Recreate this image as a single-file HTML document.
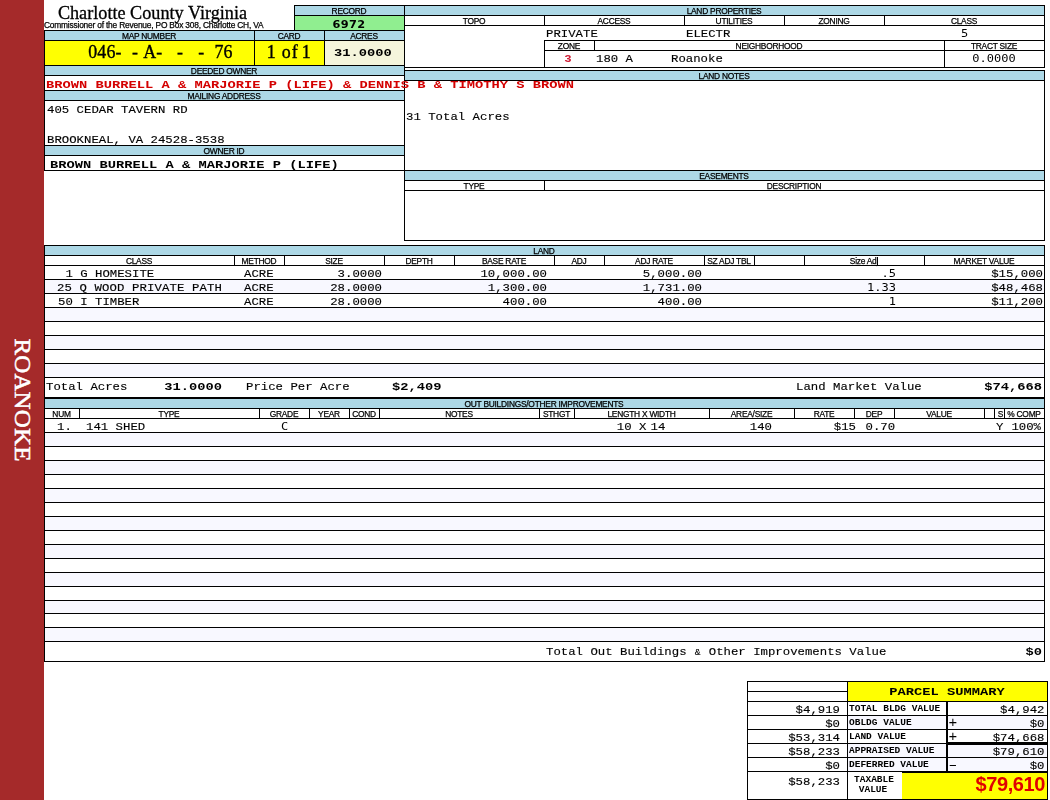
<!DOCTYPE html>
<html><head><meta charset="utf-8"><title>Charlotte County Virginia</title>
<style>
html,body{margin:0;padding:0;background:#fff;}
body{width:1050px;height:800px;position:relative;overflow:hidden;}
#pg{position:absolute;left:0;top:0;width:1050px;height:800px;opacity:0.999;}
.b{position:absolute;}
.t{position:absolute;white-space:pre;line-height:16px;height:16px;color:#000;}
.ser{font-family:"Liberation Serif",serif;font-size:18.2px;-webkit-text-stroke:0.3px #000;}
.ser2{font-family:"Liberation Serif",serif;font-size:17.9px;-webkit-text-stroke:0.35px #000;}
.amp{display:inline-block;width:7.4px;font-size:9.5px;text-align:center;}
.sub{font-family:"Liberation Sans",sans-serif;font-size:8.4px;letter-spacing:-0.2px;-webkit-text-stroke:0.25px #000;}
.lbl{font-family:"Liberation Sans",sans-serif;font-size:8.4px;letter-spacing:-0.25px;-webkit-text-stroke:0.25px #000;}
.rec{font-family:"DejaVu Sans",sans-serif;font-weight:bold;font-size:11.3px;letter-spacing:0.35px;}
.m{font-family:"Liberation Mono",monospace;font-size:12.33px;-webkit-text-stroke:0.15px #000;transform:scaleY(0.87);transform-origin:0 11px;}
.m2{font-family:"DejaVu Sans Mono","Liberation Mono",monospace;font-size:12px;transform:scaleY(0.85);transform-origin:0 12px;}
.m3{font-family:"Liberation Mono",monospace;font-size:12.33px;font-weight:bold;transform:scaleY(0.87);transform-origin:0 11px;}
.mb{font-family:"Liberation Mono",monospace;font-size:13.75px;font-weight:bold;transform:scaleY(0.81);transform-origin:0 11px;}
.ms{font-family:"Liberation Mono",monospace;font-size:9.5px;font-weight:bold;transform:scaleY(0.87);transform-origin:0 10px;}
.sg{font-family:"Liberation Mono",monospace;font-size:14.5px;}
.big{font-family:"Liberation Sans",sans-serif;font-size:20px;letter-spacing:-0.4px;font-weight:bold;color:#E00000;}
.side{font-family:"Liberation Serif",serif;font-size:23.6px;letter-spacing:0.2px;-webkit-text-stroke:0.5px #fff;color:#fff;line-height:30px;height:30px;width:200px;margin-left:-100px;margin-top:-15px;text-align:center;transform:rotate(90deg) scaleX(1.055);}
</style></head>
<body>
<div id="pg">
<div class="b" style="left:0px;top:0px;width:44px;height:800px;background:#A52A2A;"></div>
<div class="t side" style="left:23.1px;top:400.2px;">ROANOKE</div>
<div class="t ser" style="left:-47.5px;width:400px;text-align:center;top:4.5px;">Charlotte County Virginia</div>
<div class="t sub" style="left:44px;top:17px;">Commissioner of the Revenue, PO Box 308, Charlotte CH, VA</div>
<div class="b" style="left:294px;top:5px;width:111px;height:26px;background:#000;"></div>
<div class="b" style="left:295px;top:6px;width:109px;height:9px;background:#ADD8E6;"></div>
<div class="b" style="left:295px;top:16px;width:109px;height:14px;background:#90EE90;"></div>
<div class="t lbl" style="left:149px;width:400px;text-align:center;top:3px;">RECORD</div>
<div class="t rec" style="left:149px;width:400px;text-align:center;top:17px;">6972</div>
<div class="b" style="left:44px;top:30px;width:361px;height:141px;background:#000;"></div>
<div class="b" style="left:45px;top:31px;width:209px;height:9px;background:#ADD8E6;"></div>
<div class="b" style="left:255px;top:31px;width:69px;height:9px;background:#ADD8E6;"></div>
<div class="b" style="left:325px;top:31px;width:79px;height:9px;background:#ADD8E6;"></div>
<div class="t lbl" style="left:-51px;width:400px;text-align:center;top:28px;">MAP NUMBER</div>
<div class="t lbl" style="left:89px;width:400px;text-align:center;top:28px;">CARD</div>
<div class="t lbl" style="left:164px;width:400px;text-align:center;top:28px;">ACRES</div>
<div class="b" style="left:45px;top:41px;width:209px;height:24px;background:#FFFF00;"></div>
<div class="b" style="left:255px;top:41px;width:69px;height:24px;background:#FFFF00;"></div>
<div class="b" style="left:325px;top:41px;width:79px;height:24px;background:#F5F5DC;"></div>
<div class="t ser2" style="left:88.3px;top:44.2px;letter-spacing:0.1px">046-</div>
<div class="t ser2" style="left:132px;top:44.2px;">-</div>
<div class="t ser2" style="left:143.3px;top:44.2px;">A-</div>
<div class="t ser2" style="left:176.9px;top:44.2px;">-</div>
<div class="t ser2" style="left:198.3px;top:44.2px;">-</div>
<div class="t ser2" style="left:214.5px;top:44.2px;">76</div>
<div class="t ser2" style="left:266.8px;top:44.3px;">1</div>
<div class="t ser2" style="left:281.8px;top:44.3px;letter-spacing:1px">of</div>
<div class="t ser2" style="left:301.8px;top:44.3px;">1</div>
<div class="t mb" style="left:163px;width:400px;text-align:center;top:45px;">31.0000</div>
<div class="b" style="left:45px;top:66px;width:359px;height:9px;background:#ADD8E6;"></div>
<div class="t lbl" style="left:24px;width:400px;text-align:center;top:63px;">DEEDED OWNER</div>
<div class="b" style="left:45px;top:76px;width:359px;height:14px;background:#fff;"></div>
<div class="b" style="left:45px;top:91px;width:359px;height:9px;background:#ADD8E6;"></div>
<div class="t lbl" style="left:24px;width:400px;text-align:center;top:88px;">MAILING ADDRESS</div>
<div class="b" style="left:45px;top:101px;width:359px;height:44px;background:#fff;"></div>
<div class="t m" style="left:47px;top:102px;">405 CEDAR TAVERN RD</div>
<div class="t m" style="left:47px;top:132px;">BROOKNEAL, VA 24528-3538</div>
<div class="b" style="left:45px;top:146px;width:359px;height:9px;background:#ADD8E6;"></div>
<div class="t lbl" style="left:24px;width:400px;text-align:center;top:143px;">OWNER ID</div>
<div class="b" style="left:45px;top:156px;width:359px;height:14px;background:#fff;"></div>
<div class="t mb" style="left:50px;top:157px;">BROWN BURRELL A &amp; MARJORIE P (LIFE)</div>
<div class="t mb" style="left:46px;top:77px;color:#D40000;z-index:2;">BROWN BURRELL A &amp; MARJORIE P (LIFE) &amp; DENNIS B &amp; TIMOTHY S BROWN</div>
<div class="b" style="left:404px;top:5px;width:1px;height:236px;background:#000"></div>
<div class="b" style="left:1044px;top:5px;width:1px;height:63px;background:#000"></div>
<div class="b" style="left:404px;top:5px;width:641px;height:1px;background:#000"></div>
<div class="b" style="left:405px;top:6px;width:639px;height:9px;background:#ADD8E6;"></div>
<div class="b" style="left:404px;top:15px;width:641px;height:1px;background:#000"></div>
<div class="t lbl" style="left:524px;width:400px;text-align:center;top:3px;">LAND PROPERTIES</div>
<div class="b" style="left:404px;top:25px;width:641px;height:1px;background:#000"></div>
<div class="b" style="left:544px;top:15px;width:1px;height:11px;background:#000"></div>
<div class="b" style="left:684px;top:15px;width:1px;height:11px;background:#000"></div>
<div class="b" style="left:784px;top:15px;width:1px;height:11px;background:#000"></div>
<div class="b" style="left:884px;top:15px;width:1px;height:11px;background:#000"></div>
<div class="t lbl" style="left:274px;width:400px;text-align:center;top:13px;">TOPO</div>
<div class="t lbl" style="left:414px;width:400px;text-align:center;top:13px;">ACCESS</div>
<div class="t lbl" style="left:534px;width:400px;text-align:center;top:13px;">UTILITIES</div>
<div class="t lbl" style="left:634px;width:400px;text-align:center;top:13px;">ZONING</div>
<div class="t lbl" style="left:764px;width:400px;text-align:center;top:13px;">CLASS</div>
<div class="t m" style="left:546px;top:26px;">PRIVATE</div>
<div class="t m" style="left:686px;top:26px;">ELECTR</div>
<div class="t m2" style="left:961px;top:25px;">5</div>
<div class="b" style="left:544px;top:40px;width:501px;height:1px;background:#000"></div>
<div class="b" style="left:544px;top:50px;width:501px;height:1px;background:#000"></div>
<div class="b" style="left:544px;top:40px;width:1px;height:28px;background:#000"></div>
<div class="b" style="left:594px;top:40px;width:1px;height:11px;background:#000"></div>
<div class="b" style="left:944px;top:40px;width:1px;height:28px;background:#000"></div>
<div class="t lbl" style="left:369px;width:400px;text-align:center;top:38px;">ZONE</div>
<div class="t lbl" style="left:569px;width:400px;text-align:center;top:38px;">NEIGHBORHOOD</div>
<div class="t lbl" style="left:794px;width:400px;text-align:center;top:38px;">TRACT SIZE</div>
<div class="t m3" style="left:368px;width:400px;text-align:center;top:51px;color:#D02038;">3</div>
<div class="t m" style="left:596px;top:51px;">180 A</div>
<div class="t m" style="left:671px;top:51px;">Roanoke</div>
<div class="t m2" style="left:794px;width:400px;text-align:center;top:50px;">0.0000</div>
<div class="b" style="left:404px;top:67px;width:641px;height:1px;background:#000"></div>
<div class="b" style="left:1044px;top:70px;width:1px;height:171px;background:#000"></div>
<div class="b" style="left:404px;top:70px;width:641px;height:1px;background:#000"></div>
<div class="b" style="left:405px;top:71px;width:639px;height:9px;background:#ADD8E6;z-index:3;"></div>
<div class="b" style="left:404px;top:80px;width:641px;height:1px;background:#000"></div>
<div class="b" style="left:404px;top:70px;width:641px;height:1px;background:#000;z-index:3"></div>
<div class="t lbl" style="left:524px;width:400px;text-align:center;top:68px;z-index:4;">LAND NOTES</div>
<div class="t m" style="left:406px;top:109px;">31 Total Acres</div>
<div class="b" style="left:404px;top:170px;width:641px;height:1px;background:#000"></div>
<div class="b" style="left:405px;top:171px;width:639px;height:9px;background:#ADD8E6;"></div>
<div class="b" style="left:404px;top:180px;width:641px;height:1px;background:#000"></div>
<div class="t lbl" style="left:524px;width:400px;text-align:center;top:168px;">EASEMENTS</div>
<div class="b" style="left:404px;top:190px;width:641px;height:1px;background:#000"></div>
<div class="b" style="left:544px;top:180px;width:1px;height:11px;background:#000"></div>
<div class="t lbl" style="left:274px;width:400px;text-align:center;top:178px;">TYPE</div>
<div class="t lbl" style="left:594px;width:400px;text-align:center;top:178px;">DESCRIPTION</div>
<div class="b" style="left:404px;top:240px;width:641px;height:1px;background:#000"></div>
<div class="b" style="left:44px;top:245px;width:1px;height:417px;background:#000"></div>
<div class="b" style="left:1044px;top:245px;width:1px;height:417px;background:#000"></div>
<div class="b" style="left:44px;top:245px;width:1001px;height:1px;background:#000"></div>
<div class="b" style="left:45px;top:246px;width:999px;height:9px;background:#ADD8E6;"></div>
<div class="b" style="left:44px;top:255px;width:1001px;height:1px;background:#000"></div>
<div class="t lbl" style="left:344px;width:400px;text-align:center;top:243px;">LAND</div>
<div class="b" style="left:234px;top:255px;width:1px;height:11px;background:#000"></div>
<div class="b" style="left:284px;top:255px;width:1px;height:11px;background:#000"></div>
<div class="b" style="left:384px;top:255px;width:1px;height:11px;background:#000"></div>
<div class="b" style="left:454px;top:255px;width:1px;height:11px;background:#000"></div>
<div class="b" style="left:554px;top:255px;width:1px;height:11px;background:#000"></div>
<div class="b" style="left:604px;top:255px;width:1px;height:11px;background:#000"></div>
<div class="b" style="left:704px;top:255px;width:1px;height:11px;background:#000"></div>
<div class="b" style="left:754px;top:255px;width:1px;height:11px;background:#000"></div>
<div class="b" style="left:804px;top:255px;width:1px;height:11px;background:#000"></div>
<div class="b" style="left:924px;top:255px;width:1px;height:11px;background:#000"></div>
<div class="t lbl" style="left:-61.0px;width:400px;text-align:center;top:253px;">CLASS</div>
<div class="t lbl" style="left:59.0px;width:400px;text-align:center;top:253px;">METHOD</div>
<div class="t lbl" style="left:134.0px;width:400px;text-align:center;top:253px;">SIZE</div>
<div class="t lbl" style="left:219.0px;width:400px;text-align:center;top:253px;">DEPTH</div>
<div class="t lbl" style="left:304.0px;width:400px;text-align:center;top:253px;">BASE RATE</div>
<div class="t lbl" style="left:379.0px;width:400px;text-align:center;top:253px;">ADJ</div>
<div class="t lbl" style="left:454.0px;width:400px;text-align:center;top:253px;">ADJ RATE</div>
<div class="t lbl" style="left:529.0px;width:400px;text-align:center;top:253px;">SZ ADJ TBL</div>
<div class="t lbl" style="left:664.0px;width:400px;text-align:center;top:253px;">Size Adj</div>
<div class="t lbl" style="left:784.0px;width:400px;text-align:center;top:253px;">MARKET VALUE</div>
<div class="b" style="left:877px;top:257px;width:1px;height:8px;background:#000"></div>
<div class="b" style="left:44px;top:265px;width:1001px;height:1px;background:#000"></div>
<div class="b" style="left:44px;top:279px;width:1001px;height:1px;background:#000"></div>
<div class="b" style="left:45px;top:280px;width:999px;height:13px;background:#F8F8FF;"></div>
<div class="b" style="left:44px;top:293px;width:1001px;height:1px;background:#000"></div>
<div class="b" style="left:44px;top:307px;width:1001px;height:1px;background:#000"></div>
<div class="b" style="left:45px;top:308px;width:999px;height:13px;background:#F8F8FF;"></div>
<div class="b" style="left:44px;top:321px;width:1001px;height:1px;background:#000"></div>
<div class="b" style="left:44px;top:335px;width:1001px;height:1px;background:#000"></div>
<div class="b" style="left:45px;top:336px;width:999px;height:13px;background:#F8F8FF;"></div>
<div class="b" style="left:44px;top:349px;width:1001px;height:1px;background:#000"></div>
<div class="b" style="left:44px;top:363px;width:1001px;height:1px;background:#000"></div>
<div class="b" style="left:45px;top:364px;width:999px;height:13px;background:#F8F8FF;"></div>
<div class="b" style="left:44px;top:377px;width:1001px;height:1px;background:#000"></div>
<div class="t m" style="left:58px;top:266px;"> 1 G HOMESITE</div>
<div class="t m" style="left:244px;top:266px;">ACRE</div>
<div class="t m" style="right:668px;text-align:right;top:266px;">3.0000</div>
<div class="t m" style="right:503px;text-align:right;top:266px;">10,000.00</div>
<div class="t m" style="right:348px;text-align:right;top:266px;">5,000.00</div>
<div class="t m2" style="right:154px;text-align:right;top:265px;">.5</div>
<div class="t m" style="right:7px;text-align:right;top:266px;">$15,000</div>
<div class="t m" style="left:57px;top:280px;letter-spacing:0.1px;">25 Q WOOD PRIVATE PATH</div>
<div class="t m" style="left:244px;top:280px;">ACRE</div>
<div class="t m" style="right:668px;text-align:right;top:280px;">28.0000</div>
<div class="t m" style="right:503px;text-align:right;top:280px;">1,300.00</div>
<div class="t m" style="right:348px;text-align:right;top:280px;">1,731.00</div>
<div class="t m2" style="right:154px;text-align:right;top:279px;">1.33</div>
<div class="t m" style="right:7px;text-align:right;top:280px;">$48,468</div>
<div class="t m" style="left:58px;top:294px;">50 I TIMBER</div>
<div class="t m" style="left:244px;top:294px;">ACRE</div>
<div class="t m" style="right:668px;text-align:right;top:294px;">28.0000</div>
<div class="t m" style="right:503px;text-align:right;top:294px;">400.00</div>
<div class="t m" style="right:348px;text-align:right;top:294px;">400.00</div>
<div class="t m2" style="right:154px;text-align:right;top:293px;">1</div>
<div class="t m" style="right:7px;text-align:right;top:294px;">$11,200</div>
<div class="t m" style="left:46px;top:379px;">Total Acres</div>
<div class="t mb" style="right:828px;text-align:right;top:379px;">31.0000</div>
<div class="t m" style="left:246px;top:379px;">Price Per Acre</div>
<div class="t mb" style="left:392px;top:379px;">$2,409</div>
<div class="t m" style="left:796px;top:379px;">Land Market Value</div>
<div class="t mb" style="right:8px;text-align:right;top:379px;">$74,668</div>
<div class="b" style="left:44px;top:397px;width:1001px;height:2px;background:#000"></div>
<div class="b" style="left:45px;top:399px;width:999px;height:9px;background:#ADD8E6;"></div>
<div class="b" style="left:44px;top:408px;width:1001px;height:1px;background:#000"></div>
<div class="t lbl" style="left:344px;width:400px;text-align:center;top:396px;">OUT BUILDINGS/OTHER IMPROVEMENTS</div>
<div class="b" style="left:79px;top:408px;width:1px;height:11px;background:#000"></div>
<div class="b" style="left:259px;top:408px;width:1px;height:11px;background:#000"></div>
<div class="b" style="left:309px;top:408px;width:1px;height:11px;background:#000"></div>
<div class="b" style="left:349px;top:408px;width:1px;height:11px;background:#000"></div>
<div class="b" style="left:379px;top:408px;width:1px;height:11px;background:#000"></div>
<div class="b" style="left:539px;top:408px;width:1px;height:11px;background:#000"></div>
<div class="b" style="left:574px;top:408px;width:1px;height:11px;background:#000"></div>
<div class="b" style="left:709px;top:408px;width:1px;height:11px;background:#000"></div>
<div class="b" style="left:794px;top:408px;width:1px;height:11px;background:#000"></div>
<div class="b" style="left:854px;top:408px;width:1px;height:11px;background:#000"></div>
<div class="b" style="left:894px;top:408px;width:1px;height:11px;background:#000"></div>
<div class="b" style="left:984px;top:408px;width:1px;height:11px;background:#000"></div>
<div class="b" style="left:994px;top:408px;width:1px;height:11px;background:#000"></div>
<div class="b" style="left:1004px;top:408px;width:1px;height:11px;background:#000"></div>
<div class="t lbl" style="left:-138.5px;width:400px;text-align:center;top:406px;">NUM</div>
<div class="t lbl" style="left:-31.0px;width:400px;text-align:center;top:406px;">TYPE</div>
<div class="t lbl" style="left:84.0px;width:400px;text-align:center;top:406px;">GRADE</div>
<div class="t lbl" style="left:129.0px;width:400px;text-align:center;top:406px;">YEAR</div>
<div class="t lbl" style="left:164.0px;width:400px;text-align:center;top:406px;">COND</div>
<div class="t lbl" style="left:259.0px;width:400px;text-align:center;top:406px;">NOTES</div>
<div class="t lbl" style="left:356.5px;width:400px;text-align:center;top:406px;">STHGT</div>
<div class="t lbl" style="left:441.5px;width:400px;text-align:center;top:406px;">LENGTH X WIDTH</div>
<div class="t lbl" style="left:551.5px;width:400px;text-align:center;top:406px;">AREA/SIZE</div>
<div class="t lbl" style="left:624.0px;width:400px;text-align:center;top:406px;">RATE</div>
<div class="t lbl" style="left:674.0px;width:400px;text-align:center;top:406px;">DEP</div>
<div class="t lbl" style="left:739.0px;width:400px;text-align:center;top:406px;">VALUE</div>
<div class="t lbl" style="left:800.5px;width:400px;text-align:center;top:406px;">S</div>
<div class="t lbl" style="left:824.0px;width:400px;text-align:center;top:406px;">% COMP</div>
<div class="b" style="left:44px;top:418px;width:1001px;height:1px;background:#000"></div>
<div class="b" style="left:44px;top:432px;width:1001px;height:1px;background:#000"></div>
<div class="b" style="left:45px;top:433px;width:999px;height:13px;background:#F8F8FF;"></div>
<div class="b" style="left:44px;top:446px;width:1001px;height:1px;background:#000"></div>
<div class="b" style="left:44px;top:460px;width:1001px;height:1px;background:#000"></div>
<div class="b" style="left:45px;top:461px;width:999px;height:13px;background:#F8F8FF;"></div>
<div class="b" style="left:44px;top:474px;width:1001px;height:1px;background:#000"></div>
<div class="b" style="left:44px;top:488px;width:1001px;height:1px;background:#000"></div>
<div class="b" style="left:45px;top:489px;width:999px;height:13px;background:#F8F8FF;"></div>
<div class="b" style="left:44px;top:502px;width:1001px;height:1px;background:#000"></div>
<div class="b" style="left:44px;top:516px;width:1001px;height:1px;background:#000"></div>
<div class="b" style="left:45px;top:517px;width:999px;height:13px;background:#F8F8FF;"></div>
<div class="b" style="left:44px;top:530px;width:1001px;height:1px;background:#000"></div>
<div class="b" style="left:44px;top:544px;width:1001px;height:1px;background:#000"></div>
<div class="b" style="left:45px;top:545px;width:999px;height:13px;background:#F8F8FF;"></div>
<div class="b" style="left:44px;top:558px;width:1001px;height:1px;background:#000"></div>
<div class="b" style="left:44px;top:572px;width:1001px;height:1px;background:#000"></div>
<div class="b" style="left:45px;top:573px;width:999px;height:13px;background:#F8F8FF;"></div>
<div class="b" style="left:44px;top:586px;width:1001px;height:1px;background:#000"></div>
<div class="b" style="left:44px;top:600px;width:1001px;height:1px;background:#000"></div>
<div class="b" style="left:45px;top:601px;width:999px;height:12px;background:#F8F8FF;"></div>
<div class="b" style="left:44px;top:613px;width:1001px;height:1px;background:#000"></div>
<div class="b" style="left:44px;top:627px;width:1001px;height:1px;background:#000"></div>
<div class="b" style="left:45px;top:628px;width:999px;height:13px;background:#F8F8FF;"></div>
<div class="b" style="left:44px;top:641px;width:1001px;height:1px;background:#000"></div>
<div class="t m" style="left:57px;top:419px;">1.</div>
<div class="t m" style="left:86px;top:419px;">141 SHED</div>
<div class="t m2" style="left:281px;top:418px;">C</div>
<div class="t m" style="left:616.8px;top:419px;">10 X</div>
<div class="t m" style="left:650.5px;top:419px;">14</div>
<div class="t m" style="right:278px;text-align:right;top:419px;">140</div>
<div class="t m" style="right:194px;text-align:right;top:419px;">$15</div>
<div class="t m" style="left:865.5px;top:419px;">0.70</div>
<div class="t m" style="left:996px;top:419px;">Y</div>
<div class="t m" style="right:9px;text-align:right;top:419px;">100%</div>
<div class="b" style="left:44px;top:661px;width:1001px;height:1px;background:#000"></div>
<div class="t m" style="left:546px;top:644px;">Total Out Buildings <span class="amp">&amp;</span> Other Improvements Value</div>
<div class="t mb" style="right:8px;text-align:right;top:644px;">$0</div>
<div class="b" style="left:747px;top:681px;width:301px;height:119px;background:#000;"></div>
<div class="b" style="left:748px;top:682px;width:99px;height:9px;background:#fff;"></div>
<div class="b" style="left:748px;top:692px;width:99px;height:9px;background:#fff;"></div>
<div class="b" style="left:848px;top:682px;width:199px;height:19px;background:#FFFF00;"></div>
<div class="t mb" style="left:747px;width:400px;text-align:center;top:684px;">PARCEL SUMMARY</div>
<div class="b" style="left:748px;top:702px;width:99px;height:13px;background:#fff;"></div>
<div class="b" style="left:848px;top:702px;width:98px;height:13px;background:#fff;"></div>
<div class="b" style="left:948px;top:702px;width:99px;height:13px;background:#fff;"></div>
<div class="t m" style="right:210px;text-align:right;top:701.5px;">$4,919</div>
<div class="t ms" style="left:849px;top:701px;">TOTAL BLDG VALUE</div>
<div class="t m" style="right:5.5px;text-align:right;top:701.5px;">$4,942</div>
<div class="b" style="left:748px;top:716px;width:99px;height:13px;background:#fff;"></div>
<div class="b" style="left:848px;top:716px;width:98px;height:13px;background:#F8F8FF;"></div>
<div class="b" style="left:948px;top:716px;width:99px;height:13px;background:#F8F8FF;"></div>
<div class="t m" style="right:210px;text-align:right;top:715.5px;">$0</div>
<div class="t ms" style="left:849px;top:715px;">OBLDG VALUE</div>
<div class="t m" style="right:5.5px;text-align:right;top:715.5px;">$0</div>
<div class="t sg" style="left:948.5px;top:715px;">+</div>
<div class="b" style="left:748px;top:730px;width:99px;height:13px;background:#fff;"></div>
<div class="b" style="left:848px;top:730px;width:98px;height:13px;background:#fff;"></div>
<div class="b" style="left:948px;top:730px;width:99px;height:13px;background:#fff;"></div>
<div class="t m" style="right:210px;text-align:right;top:729.5px;">$53,314</div>
<div class="t ms" style="left:849px;top:729px;">LAND VALUE</div>
<div class="t m" style="right:5.5px;text-align:right;top:729.5px;">$74,668</div>
<div class="t sg" style="left:948.5px;top:729px;">+</div>
<div class="b" style="left:748px;top:744px;width:99px;height:13px;background:#fff;"></div>
<div class="b" style="left:848px;top:744px;width:98px;height:13px;background:#F8F8FF;"></div>
<div class="b" style="left:948px;top:744px;width:99px;height:13px;background:#F8F8FF;"></div>
<div class="t m" style="right:210px;text-align:right;top:743.5px;">$58,233</div>
<div class="t ms" style="left:849px;top:743px;">APPRAISED VALUE</div>
<div class="t m" style="right:5.5px;text-align:right;top:743.5px;">$79,610</div>
<div class="b" style="left:748px;top:758px;width:99px;height:13px;background:#fff;"></div>
<div class="b" style="left:848px;top:758px;width:98px;height:13px;background:#F8F8FF;"></div>
<div class="b" style="left:948px;top:758px;width:99px;height:13px;background:#F8F8FF;"></div>
<div class="t m" style="right:210px;text-align:right;top:757.5px;">$0</div>
<div class="t ms" style="left:849px;top:757px;">DEFERRED VALUE</div>
<div class="t m" style="right:5.5px;text-align:right;top:757.5px;">$0</div>
<div class="t sg" style="left:948.5px;top:757px;">–</div>
<div class="b" style="left:948px;top:742px;width:99px;height:3px;background:#000"></div>
<div class="b" style="left:948px;top:771px;width:99px;height:2px;background:#000"></div>
<div class="b" style="left:748px;top:772px;width:99px;height:27px;background:#fff;"></div>
<div class="b" style="left:848px;top:772px;width:54px;height:27px;background:#fff;"></div>
<div class="b" style="left:902px;top:773px;width:145px;height:26px;background:#FFFF00;"></div>
<div class="t m" style="right:210px;text-align:right;top:773.5px;">$58,233</div>
<div class="t ms" style="left:674px;width:400px;text-align:center;top:771.5px;">TAXABLE</div>
<div class="t ms" style="left:673px;width:400px;text-align:center;top:781.5px;">VALUE</div>
<div class="t big" style="right:5px;text-align:right;top:776px;">$79,610</div>
</div>
</body></html>
